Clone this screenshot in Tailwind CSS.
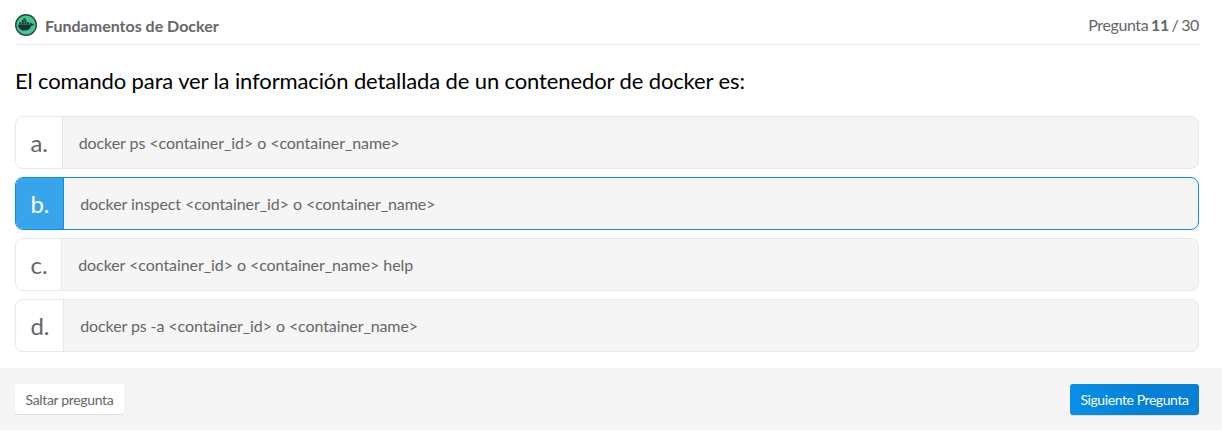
<!DOCTYPE html>
<html lang="es"><head><meta charset="utf-8"><title>Fundamentos de Docker</title>
<script src="https://cdn.jsdelivr.net/npm/@tailwindcss/browser@4"></script></head>
<body class="bg-white font-['Lato',sans-serif] text-[#666668]">
<header class="ml-[15px] mr-[23px] h-[45px] border-b border-[#e8e8e8] flex items-center justify-between pt-[7px]">
<div class="flex items-center gap-2"><svg class="size-[22px] -mt-[2px]" viewBox="0 0 22 22"><circle cx="11" cy="11" r="10.3" fill="#43c78c" stroke="#24464a" stroke-width="1.4"/><path d="M3 10.800h11.700c.7-.7.3-1.900.9-2.600.8.500 1 1.100 1.100 1.700.8-.2 1.700 0 2.400.3-.6 1.100-1.500 1.500-2.800 1.500-1 3.300-3.400 4.900-6.700 4.900-3.800 0-6.300-2-6.600-5.800zM4.200 8.300h2.100v2.100h-2.100zM6.800 8.300h2.100v2.100h-2.100zM9.400 8.300h2.100v2.100h-2.100zM12 8.300h2.100v2.100h-2.100zM6.800 6.100h2.100v1.800h-2.100zM9.400 6.100h2.100v1.800h-2.100zM8.400 4.300h2.100v1.400h-2.100z" fill="#17343a"/></svg><b class="text-[16px]">Fundamentos de Docker</b></div>
<div class="text-[16px] tracking-[-0.4px] [word-spacing:-0.9px] -mt-[2px]">Pregunta <b>11</b> / 30</div></header>
<main class="pl-[15px] pr-[23px]">
<h1 class="h-[71px] text-[22px] text-black leading-[71px] tracking-[-0.12px]">El comando para ver la información detallada de un contenedor de docker es:</h1>
<div class="flex flex-col gap-2 text-[16px] tracking-[-0.07px]">
<div class="h-[53px] flex rounded-[8px] border border-[#e8e8e8] bg-[#f5f5f5] overflow-hidden"><div class="bg-white border-r border-[#e8e8e8] pl-[14.500px] pr-[13.700px] text-[24px] leading-[51px]">a.</div><div class="pl-4 leading-[52px]">docker ps &lt;container_id&gt; o &lt;container_name&gt;</div></div>
<div class="h-[53px] flex rounded-[8px] border border-[#0791e6] bg-[#f5f5f5] overflow-hidden"><div class="bg-[#37a4ec] text-white border-r border-[#0791e6] pl-[14.500px] pr-[13.700px] text-[24px] leading-[51px]">b.</div><div class="pl-4 leading-[52px]">docker inspect &lt;container_id&gt; o &lt;container_name&gt;</div></div>
<div class="h-[53px] flex rounded-[8px] border border-[#e8e8e8] bg-[#f5f5f5] overflow-hidden"><div class="bg-white border-r border-[#e8e8e8] pl-[14.500px] pr-[13.700px] text-[24px] leading-[51px]">c.</div><div class="pl-4 leading-[52px]">docker &lt;container_id&gt; o &lt;container_name&gt; help</div></div>
<div class="h-[53px] flex rounded-[8px] border border-[#e8e8e8] bg-[#f5f5f5] overflow-hidden"><div class="bg-white border-r border-[#e8e8e8] pl-[14.500px] pr-[13.700px] text-[24px] leading-[51px]">d.</div><div class="pl-4 leading-[52px] tracking-[-0.09px]">docker ps -a &lt;container_id&gt; o &lt;container_name&gt;</div></div>
</div></main>
<footer class="mt-4 h-[62px] bg-[#f5f5f5] pl-[15px] pr-[23px] flex items-center justify-between text-[14px]">
<button class="w-[109px] h-[30px] -mt-px pt-[2px] rounded-[3px] bg-white shadow-[0_1px_1px_rgba(0,0,0,0.1)] tracking-[-0.34px] whitespace-nowrap">Saltar pregunta</button><button class="w-[129px] h-[31px] rounded-[3px] bg-linear-to-r from-[#0791e6] to-[#0580d4] to-60% shadow-[0_1px_1px_rgba(0,0,0,0.1)] text-white tracking-[-0.42px] whitespace-nowrap">Siguiente Pregunta</button></footer>
</body></html>
